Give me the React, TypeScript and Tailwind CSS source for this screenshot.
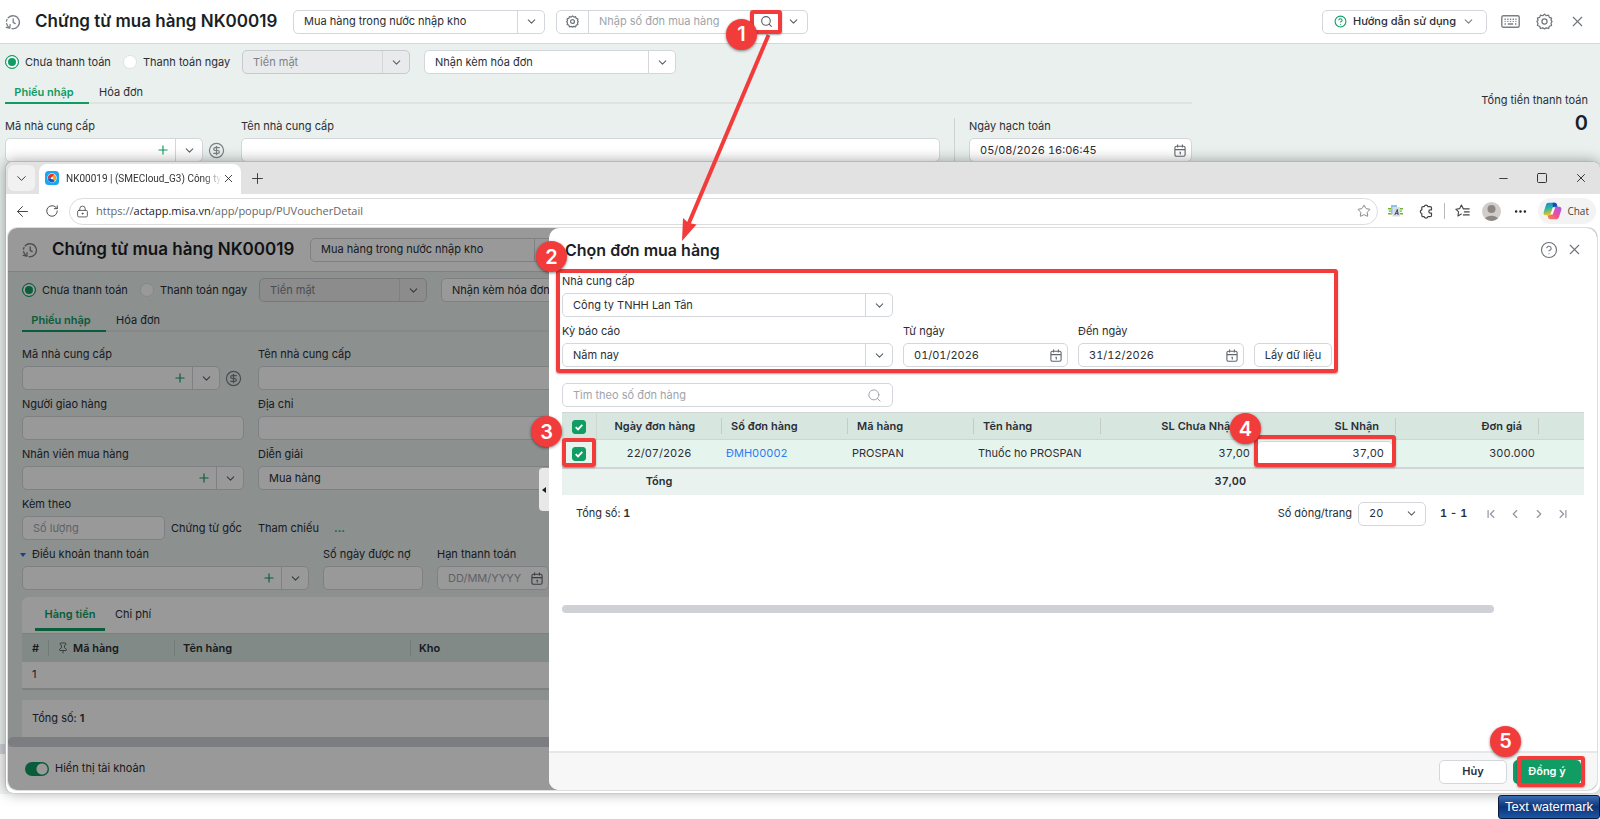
import { useId, useState } from "react"
import type { ReactNode } from "react"
import { clsx } from "clsx"
import {
    ArrowLeft,
    ChevronDown,
    ChevronFirst,
    ChevronLast,
    ChevronLeft,
    ChevronRight,
    CircleDollarSign,
    CircleQuestionMark,
    Ellipsis,
    LockKeyhole,
    Minus,
    Pin,
    Plus,
    RotateCw,
    Search,
    Square,
    Star,
    X,
} from "lucide-react"

const box = "h-6 rounded-[5px] border border-[#d3d6db] bg-white"

/* ---------- icons ---------- */

const HistoryIcon = () => (
    <svg width="16" height="16" viewBox="0 0 16 16" fill="none" stroke="#7b7f86" strokeWidth="1.3" strokeLinecap="round" strokeLinejoin="round">
        <path d="M3.2 3.8A6.500 6.500 0 1 1 7 14.700" />
        <path d="M4.600 13.900A6.500 6.500 0 0 1 1.600 9.600" />
        <path d="M1.200 13.400l3.600.6.300-3.400" />
        <path d="M1.500 7.200a6.500 6.500 0 0 1 .5-1.700" />
        <path d="M8.2 4.8v3.6l2 1.2" />
    </svg>
)

const GearIcon = ({ size = 17 }: { size?: number }) => (
    <svg width={size} height={size} viewBox="0 0 18 18" fill="none" stroke="#6f737b" strokeWidth={size < 15 ? 1.7 : 1.3} strokeLinejoin="round">
        <path d="M9 1.2l1.9 1.7 2.4-.7.8 2.4 2.4.8-.6 2.3L17 9l-1.1 1.9.6 2.3-2.4.8-.8 2.4-2.4-.7L9 16.8l-1.9-1.1-2.4.7-.8-2.4-2.4-.8.6-2.3L1 9l1.1-1.3-.6-2.3 2.4-.8.8-2.4 2.4.7z" />
        <circle cx="9" cy="9" r="2.7" />
    </svg>
)

const KeyboardIcon = () => (
    <svg width="19" height="13" viewBox="0 0 19 13" fill="none" stroke="#7b7f86" strokeWidth="1.4">
        <rect x="0.8" y="0.8" width="17.4" height="11.4" rx="1.5" />
        <path d="M3.5 4.2h12" strokeDasharray="1.3 1.4" />
        <path d="M3.5 6.4h12" strokeDasharray="1.3 1.4" strokeWidth="1" />
        <path d="M3.5 9h1.4M6.8 9h5.4M14 9h1.4" />
    </svg>
)

const CalendarIcon = () => (
    <svg width="12" height="13" viewBox="0 0 12 13" fill="none" stroke="#62666e" strokeWidth="1.1" className="shrink-0">
        <rect x="0.9" y="2.2" width="10.2" height="10" rx="1.5" />
        <path d="M1 5.6h10M3.6 0.4v3M8.4 0.4v3M5.4 8.2h.9v2.4" />
    </svg>
)

const BrandIcon = () => (
    <svg width="14" height="14" viewBox="0 0 14 14" className="shrink-0">
        <rect width="14" height="14" rx="3.5" fill="#18a8f2" />
        <circle cx="7" cy="7" r="4.7" fill="#fff" />
        <path d="M2.700 7.200A4.300 4.300 0 0 1 9.500 3.500L7.200 6A1.200 1.200 0 0 0 6 7.200z" fill="#e5342c" />
        <path d="M9.500 3.500a4.300 4.300 0 0 1 .3 6.800L7.900 8a1.200 1.200 0 0 0-.7-2z" fill="#f9a01b" />
        <path d="M9.800 10.300A4.300 4.300 0 0 1 2.700 7.200H6A1.200 1.200 0 0 0 7.900 8z" fill="#1b56c9" />
    </svg>
)

const TranslateIcon = () => (
    <svg width="15" height="14" viewBox="0 0 15 14">
        <path d="M0 4h4v1.600H0zM.8 6.400h3v1.400h-3zM0 9h4v1.600H0zM11 4h4v1.600h-4zM11 6.400h3v1.400h-3zM11 9h4v1.600h-4z" fill="#6fb52c" />
        <rect x="3" y="1" width="6" height="9" fill="#8ec3ee" />
        <rect x="4.500" y="3" width="7.500" height="9.500" fill="#d5dde8" />
        <path d="M6.800 11L9.300 5.400l.9 5.600M7.700 9.300h2.400" stroke="#333a4a" strokeWidth="0.9" fill="none" />
    </svg>
)

const ExtensionIcon = () => (
    <svg width="15" height="15" viewBox="0 0 15 15" fill="none" stroke="#444" strokeWidth="1.2" strokeLinejoin="round">
        <path d="M5.200 2.600a1.900 1.900 0 0 1 3.700 0h2.400c.7 0 1.200.5 1.200 1.200v2h-1a1.700 1.700 0 0 0 0 3.400h1v2.300c0 .7-.5 1.200-1.200 1.200H8.900a1.900 1.900 0 0 1-3.700 0H4c-.7 0-1.200-.5-1.200-1.200V9.500a1.900 1.900 0 0 1 0-3.700v-2c0-.7.5-1.200 1.200-1.200z" />
    </svg>
)

const FavoritesIcon = () => (
    <svg width="15" height="14" viewBox="0 0 15 14" fill="none" stroke="#444" strokeWidth="1.1" strokeLinejoin="round" strokeLinecap="round">
        <path d="M8.2 4.6L6.4 1 4.7 4.6.8 5.2l2.8 2.7-.7 4.1 3.4-1.9" />
        <path d="M8.4 4.9h5.8M9.4 7.9h4.8M8.4 10.9h5.8" />
    </svg>
)

const CopilotIcon = () => (
    <svg width="19" height="18" viewBox="0 0 19 18">
        <defs>
            <linearGradient id="cpA" x1="0" y1="0" x2="0.3" y2="1">
                <stop offset="0" stopColor="#1b7fe0" />
                <stop offset="0.5" stopColor="#2ab7a0" />
                <stop offset="1" stopColor="#f3c61c" />
            </linearGradient>
            <linearGradient id="cpB" x1="1" y1="0" x2="0" y2="1">
                <stop offset="0" stopColor="#9a5cf0" />
                <stop offset="0.5" stopColor="#ee4f9b" />
                <stop offset="1" stopColor="#fb8a3c" />
            </linearGradient>
        </defs>
        <path d="M5.6 0.8h6.2c1.4 0 1.8 1 2.2 2.3l.5 1.7h-2.2c-1.4 0-2.1.8-2.5 2.1L8.300 11.400c-.4 1.200-1 1.800-2.300 1.800H2.900C.9 13.200.2 11.800.7 10L2.900 3.200C3.400 1.600 4.200.8 5.600.8z" fill="url(#cpA)" />
        <path d="M9.600 0.800h2.200c1.400 0 1.800 1 2.200 2.300l.5 1.700h-2.200c-1.200 0-1.900.6-2.300 1.600z" fill="#1449c4" />
        <path d="M13.400 17.200H7.200c-1.400 0-1.800-1-2.200-2.300l-.5-1.700h1.700c1.400 0 2.100-.8 2.500-2.100l1.500-4.500c.4-1.200 1-1.800 2.300-1.800h3.600c2 0 2.700 1.400 2.200 3.200l-2.200 6.800c-.5 1.600-1.300 2.400-2.700 2.400z" fill="url(#cpB)" />
        <path d="M7.400 12.600L9.900 5.300h2.300l-2.500 7.300z" fill="#fff" />
    </svg>
)

/* ---------- shared controls ---------- */

interface DropdownProps {
    id?: string;
    label?: string;
    value: string;
    disabled?: boolean;
    className?: string;
}

const Dropdown = ({ id, label, value, disabled, className }: DropdownProps) => (
    <div className={clsx("relative flex h-6 rounded-[5px] border", disabled ? "border-[#c6c9cd] bg-[#e9eaeb]" : "border-[#d3d6db] bg-white", className)}>
        <select
            id={id}
            aria-label={label}
            disabled={disabled}
            className={clsx("w-full appearance-none bg-transparent pl-2.5 pr-7 outline-none", disabled && "text-[#7d8187]")}
        >
            <option>{value}</option>
        </select>
        <span className="pointer-events-none absolute inset-y-0 right-0 flex w-[27px] items-center justify-center border-l border-[#d3d6db]">
            <ChevronDown size={13} className="text-[#5c6068]" />
        </span>
    </div>
)

const Combo = ({ id, className }: { id: string; className?: string }) => (
    <div className={clsx("flex min-w-0", box, className)}>
        <input id={id} className="min-w-0 flex-1 bg-transparent pl-2.5 outline-none" />
        <button aria-label="Thêm mới" className="flex w-6 items-center justify-center text-[#109c63]"><Plus size={14} /></button>
        <button aria-label="Mở danh sách" className="flex w-[27px] items-center justify-center border-l border-[#d3d6db] text-[#5c6068]"><ChevronDown size={13} /></button>
    </div>
)

interface DateInputProps {
    id: string;
    value?: string;
    placeholder?: string;
    className?: string;
}

const DateInput = ({ id, value, placeholder, className }: DateInputProps) => (
    <div className={clsx("flex items-center pl-2.5 pr-[5px]", box, className)}>
        <input id={id} defaultValue={value} placeholder={placeholder} className="min-w-0 flex-1 bg-transparent tabular-nums outline-none placeholder:text-[#a0a4ab]" />
        <CalendarIcon />
    </div>
)

interface FieldProps {
    id: string;
    label: string;
    className?: string;
    children: ReactNode;
}

const Field = ({ id, label, className, children }: FieldProps) => (
    <div className={clsx("flex min-w-0 flex-col gap-1", className)}>
        <label htmlFor={id} className="h-4 leading-4 whitespace-nowrap">{label}</label>
        {children}
    </div>
)

const Step = ({ n, className }: { n: number; className: string }) => (
    <span className={clsx("absolute z-20 flex size-[31px] items-center justify-center rounded-full bg-[#f23c3c] text-[20px] font-semibold text-white shadow-[0_1px_3px_rgba(0,0,0,0.5)]", className)}>
        {n}
    </span>
)

const Mark = ({ className }: { className: string }) => (
    <span className={clsx("pointer-events-none absolute z-10 rounded-[3px] border-4 border-[#f23c3c] shadow-[0_1px_2px_rgba(0,0,0,0.35)]", className)} />
)

/* ---------- voucher form ---------- */

const VoucherForm = ({ popup }: { popup?: boolean }) => {
    const id = useId()
    const [ paid, setPaid ] = useState(false)

    return (
        <div className="flex flex-1 flex-col bg-[#e9f0ee]">
            <header className={clsx("flex h-11 shrink-0 items-center border-b border-[#d3d9d8] bg-white pr-[14px]", popup ? "pl-[14px]" : "pl-[5px]")}>
                <HistoryIcon />
                <h1 className="ml-[14px] w-[238px] shrink-0 text-[17px] font-semibold whitespace-nowrap text-[#1b1f26]">Chứng từ mua hàng NK00019</h1>
                <Dropdown label="Loại chứng từ" value="Mua hàng trong nước nhập kho" className="ml-5 w-[252px] shrink-0" />
                {!popup && (
                    <>
                        <div className={clsx("relative ml-[11px] flex w-[252px] shrink-0", box)}>
                            <button aria-label="Thiết lập" className="flex w-8 shrink-0 items-center justify-center border-r border-[#d3d6db]"><GearIcon size={13} /></button>
                            <input aria-label="Số đơn mua hàng" placeholder="Nhập số đơn mua hàng" className="min-w-0 flex-1 pl-2.5 outline-none placeholder:text-[#a0a4ab]" />
                            <button aria-label="Tìm kiếm" className="relative flex w-7 items-center justify-center text-[#5c6068]">
                                <Search size={13} />
                                <Mark className="-inset-x-0.5 -inset-y-px" />
                                <Step n={1} className="top-2 -left-[26px]" />
                            </button>
                            <button aria-label="Mở danh sách" className="flex w-[27px] items-center justify-center text-[#5c6068]"><ChevronDown size={13} /></button>
                        </div>
                        <button className={clsx("ml-auto flex items-center gap-1.5 px-[11px] font-medium whitespace-nowrap", box)}>
                            <CircleQuestionMark size={13} className="text-[#109c63]" />
                            Hướng dẫn sử dụng
                            <ChevronDown size={13} className="text-[#7b7f86]" />
                        </button>
                        <button aria-label="Phím tắt" className="ml-[14px]"><KeyboardIcon /></button>
                        <button aria-label="Tùy chỉnh" className="ml-4"><GearIcon /></button>
                        <button aria-label="Đóng" className="ml-4 text-[#6f737b]"><X size={17} strokeWidth={1.6} /></button>
                    </>
                )}
            </header>

            <div className={clsx("flex", popup ? "pl-[14px]" : "pr-3 pl-[5px]")}>
                <div className="flex min-w-0 flex-1 flex-col">
                    <div className="mt-1.5 flex h-6 items-center whitespace-nowrap">
                        <label className="flex w-[118px] items-center gap-1.5">
                            <input type="radio" name={id + "pay"} checked={!paid} onChange={() => setPaid(false)} className="size-[14px] appearance-none rounded-full border border-white bg-white checked:border-[#109c63] checked:bg-[#109c63] checked:shadow-[inset_0_0_0_2px_#fff]" />
                            Chưa thanh toán
                        </label>
                        <label className="flex w-[119px] items-center gap-1.5">
                            <input type="radio" name={id + "pay"} checked={paid} onChange={() => setPaid(true)} className="size-[14px] appearance-none rounded-full border border-[#dfe3e3] bg-white checked:border-[#109c63] checked:bg-[#109c63] checked:shadow-[inset_0_0_0_2px_#fff]" />
                            Thanh toán ngay
                        </label>
                        <Dropdown label="Phương thức thanh toán" value="Tiền mặt" disabled className="w-[168px] shrink-0" />
                        <Dropdown label="Hóa đơn" value="Nhận kèm hóa đơn" className="ml-[14px] w-[252px] shrink-0" />
                    </div>

                    <div className="flex h-[30px] border-b-2 border-[#dfe4e3]">
                        <button className="-mb-0.5 w-[84px] border-b-2 border-[#109c63] pt-2 pr-1.5 font-semibold text-[#109c63]">Phiếu nhập</button>
                        <button className="px-2.5 pt-2">Hóa đơn</button>
                    </div>

                    <div className="mt-[14px] flex flex-col gap-1.5">
                        <div className="flex gap-[14px]">
                            <Field id={id + "code"} label="Mã nhà cung cấp" className="w-[222px] shrink-0">
                                <div className="flex items-center gap-[5px]">
                                    <Combo id={id + "code"} className="w-[198px]" />
                                    <CircleDollarSign size={17} strokeWidth={1.7} className="text-[#7b7f86]" />
                                </div>
                            </Field>
                            <Field id={id + "name"} label="Tên nhà cung cấp" className="flex-1">
                                <input id={id + "name"} className={clsx("pl-2.5 outline-none", box)} />
                            </Field>
                            {!popup && (
                                <Field id={id + "date"} label="Ngày hạch toán" className="w-[238px] shrink-0 border-l border-[#cdd4d2] pl-[14px]">
                                    <DateInput id={id + "date"} value="05/08/2026 16:06:45" />
                                </Field>
                            )}
                        </div>

                        {popup && (
                            <>
                                <div className="flex gap-[14px]">
                                    <Field id={id + "ship"} label="Người giao hàng" className="w-[222px] shrink-0">
                                        <input id={id + "ship"} className={clsx("pl-2.5 outline-none", box)} />
                                    </Field>
                                    <Field id={id + "addr"} label="Địa chỉ" className="flex-1">
                                        <input id={id + "addr"} className={clsx("pl-2.5 outline-none", box)} />
                                    </Field>
                                </div>
                                <div className="flex gap-[14px]">
                                    <Field id={id + "emp"} label="Nhân viên mua hàng" className="w-[222px] shrink-0">
                                        <Combo id={id + "emp"} />
                                    </Field>
                                    <Field id={id + "desc"} label="Diễn giải" className="flex-1">
                                        <input id={id + "desc"} defaultValue="Mua hàng" className={clsx("pl-2.5 outline-none", box)} />
                                    </Field>
                                </div>
                                <div className="flex items-end">
                                    <Field id={id + "qty"} label="Kèm theo" className="w-[143px] shrink-0">
                                        <input id={id + "qty"} placeholder="Số lượng" className={clsx("pl-2.5 outline-none placeholder:text-[#a0a4ab]", box)} />
                                    </Field>
                                    <span className="ml-1.5 w-[87px] leading-6">Chứng từ gốc</span>
                                    <span className="w-[76px] leading-6">Tham chiếu</span>
                                    <button className="h-6 font-bold text-[#00a862]">...</button>
                                </div>
                                <div className="flex gap-[14px]">
                                    <div className="relative w-[287px] shrink-0">
                                        <span className="absolute top-[7px] -left-[2px] size-0 border-x-[3px] border-t-4 border-x-transparent border-t-[#1a73e8]" />
                                        <div className="flex flex-col gap-1">
                                            <label htmlFor={id + "term"} className="h-4 pl-2.5 leading-4">Điều khoản thanh toán</label>
                                            <Combo id={id + "term"} />
                                        </div>
                                    </div>
                                    <Field id={id + "days"} label="Số ngày được nợ" className="w-[100px] shrink-0">
                                        <input id={id + "days"} className={clsx("pl-2.5 outline-none", box)} />
                                    </Field>
                                    <Field id={id + "due"} label="Hạn thanh toán" className="w-[112px] shrink-0">
                                        <DateInput id={id + "due"} placeholder="DD/MM/YYYY" />
                                    </Field>
                                </div>
                            </>
                        )}
                    </div>
                </div>

                {!popup && (
                    <div className="flex w-[396px] shrink-0 flex-col items-end pt-12">
                        <span className="leading-4">Tổng tiền thanh toán</span>
                        <span className="text-[20px] leading-[30px] font-semibold text-[#1b1f26]">0</span>
                    </div>
                )}
            </div>

            {popup && (
                <>
                    <div className="mt-[7px] ml-[14px] rounded-tl-md bg-white">
                        <div className="flex h-[34px] px-[13px]">
                            <button className="w-[70px] border-b-[3px] border-[#109c63] pt-1 font-semibold text-[#109c63]">Hàng tiền</button>
                            <button className="px-2.5">Chi phí</button>
                        </div>
                        <table className="mt-0.5 w-full table-fixed border-b-2 border-[#d3d6db]">
                            <colgroup>
                                <col className="w-[26px]" />
                                <col className="w-[126px]" />
                                <col className="w-[236px]" />
                                <col />
                            </colgroup>
                            <thead>
                                <tr className="h-7 border-t border-[#d3d6db] bg-[#d8e6e0] text-left">
                                    <th className="pl-2.5 font-semibold">#</th>
                                    <th className="font-semibold">
                                        <span className="flex h-4 items-center gap-1 border-l border-[#c3ccc9] pl-2"><Pin size={12} className="text-[#62666e]" />Mã hàng</span>
                                    </th>
                                    <th className="font-semibold"><span className="block h-4 border-l border-[#c3ccc9] pl-2 leading-4">Tên hàng</span></th>
                                    <th className="font-semibold"><span className="block h-4 border-l border-[#c3ccc9] pl-2 leading-4">Kho</span></th>
                                </tr>
                            </thead>
                            <tbody>
                                <tr className="h-[27px]">
                                    <td className="pl-2.5">1</td>
                                    <td />
                                    <td />
                                    <td />
                                </tr>
                            </tbody>
                        </table>
                    </div>
                    <div className="mt-[10px] ml-[14px] flex-1 bg-white pt-2.5 pl-2.5 leading-4">Tổng số: <b className="font-semibold">1</b></div>
                    <div className="h-2.5 shrink-0 rounded-full bg-[#cfd0d8]" />
                    <div className="flex h-[43px] shrink-0 items-center bg-white pl-[17px]">
                        <label className="flex items-center gap-1.5">
                            <input type="checkbox" role="switch" defaultChecked className="h-[14px] w-6 appearance-none rounded-full bg-[#aaa] bg-[radial-gradient(circle_at_17px_7px,#fff_5px,transparent_6px)] checked:bg-[#109c63]" />
                            Hiển thị tài khoản
                        </label>
                    </div>
                </>
            )}
        </div>
    )
}

/* ---------- order picker ---------- */

const headLine = "block h-4 border-r border-[#c3ccc9] leading-4"
const tick = "block size-[14px] appearance-none rounded-[3px] border border-[#a0a4ab] bg-white checked:border-[#109c63] checked:bg-[#109c63]"

const Tick = ({ label }: { label: string }) => (
    <span className="relative inline-block align-middle">
        <input type="checkbox" aria-label={label} defaultChecked className={tick} />
        <svg width="14" height="14" viewBox="0 0 14 14" className="pointer-events-none absolute inset-0" fill="none" stroke="#fff" strokeWidth="1.8">
            <path d="M3.700 7.100l2.300 2.300 4.300-4.600" />
        </svg>
    </span>
)

const OrderPicker = () => (
    <section className="absolute inset-y-0 right-0 left-[541px] flex flex-col rounded-[10px] bg-white">
        <button aria-label="Thu gọn" className="absolute top-[240px] -left-2.5 flex h-[43px] w-2.5 items-center justify-center rounded-l bg-[#e8e8e8]">
            <span className="size-0 border-y-[3px] border-r-4 border-y-transparent border-r-[#1b1f26]" />
        </button>
        <Step n={2} className="top-[13px] -left-[13px]" />

        <div className="flex h-[45px] shrink-0 items-center pr-[14px] pb-0.5 pl-4">
            <h2 className="text-[16px] font-semibold text-[#1b1f26]">Chọn đơn mua hàng</h2>
            <button aria-label="Trợ giúp" className="ml-auto text-[#6f737b]"><CircleQuestionMark size={18} strokeWidth={1.5} /></button>
            <button aria-label="Đóng" className="ml-2 text-[#6f737b]"><X size={17} strokeWidth={1.6} /></button>
        </div>

        <div className="relative ml-[13px] flex w-[770px] flex-col gap-1.5">
            <Mark className="-inset-x-1.5 -top-1 -bottom-1.5" />
            <Field id="supplier" label="Nhà cung cấp" className="w-[331px]">
                <Dropdown id="supplier" value="Công ty TNHH Lan Tân" />
            </Field>
            <div className="flex items-end gap-2.5">
                <Field id="period" label="Kỳ báo cáo" className="w-[331px]">
                    <Dropdown id="period" value="Năm nay" />
                </Field>
                <Field id="from" label="Từ ngày" className="w-[165px]">
                    <DateInput id="from" value="01/01/2026" />
                </Field>
                <Field id="to" label="Đến ngày" className="w-[166px]">
                    <DateInput id="to" value="31/12/2026" />
                </Field>
                <button className={clsx("flex-1 whitespace-nowrap", box)}>Lấy dữ liệu</button>
            </div>
        </div>

        <div className={clsx("mt-4 ml-[13px] flex w-[331px] shrink-0 items-center pr-2.5 pl-2.5", box)}>
            <input aria-label="Tìm theo số đơn hàng" placeholder="Tìm theo số đơn hàng" className="min-w-0 flex-1 outline-none placeholder:text-[#a0a4ab]" />
            <Search size={15} strokeWidth={1.6} className="text-[#a0a4ab]" />
        </div>

        <div className="relative mx-[13px] mt-[5px]">
            <Step n={3} className="top-1 -left-[31px]" />
            <table className="w-full table-fixed tabular-nums">
                <colgroup>
                    <col className="w-[34px]" />
                    <col className="w-[126px]" />
                    <col className="w-[126px]" />
                    <col className="w-[126px]" />
                    <col />
                    <col className="w-[153px]" />
                    <col className="w-[142px]" />
                    <col className="w-[143px]" />
                    <col className="w-[45px]" />
                </colgroup>
                <thead>
                    <tr className="h-[27px] border-y border-[#cfd6d4] bg-[#d8e6e0] font-semibold">
                        <th className="border-r border-[#cfd6d4]"><Tick label="Chọn tất cả" /></th>
                        <th className="font-semibold"><span className={clsx(headLine, "pr-2")}>Ngày đơn hàng</span></th>
                        <th className="text-left font-semibold"><span className={clsx(headLine, "pl-[9px]")}>Số đơn hàng</span></th>
                        <th className="text-left font-semibold"><span className={clsx(headLine, "pl-[9px]")}>Mã hàng</span></th>
                        <th className="text-left font-semibold"><span className={clsx(headLine, "pl-[9px]")}>Tên hàng</span></th>
                        <th className="text-right font-semibold"><span className={clsx(headLine, "pr-4")}>SL Chưa Nhận</span></th>
                        <th className="relative text-right font-semibold">
                            <Step n={4} className="top-0 -left-6" />
                            <span className={clsx(headLine, "pr-4")}>SL Nhận</span>
                        </th>
                        <th className="text-right font-semibold"><span className={clsx(headLine, "pr-4")}>Đơn giá</span></th>
                        <th />
                    </tr>
                </thead>
                <tbody>
                    <tr className="h-7 bg-[#e6f4ee]">
                        <td className="relative text-center">
                            <Tick label="Chọn ĐMH00002" />
                            <Mark className="inset-x-0 -top-0.5 bottom-0" />
                        </td>
                        <td className="text-center">22/07/2026</td>
                        <td className="pl-1"><a href="#dmh00002" className="text-[#2f7bf0]">ĐMH00002</a></td>
                        <td className="pl-1">PROSPAN</td>
                        <td className="pl-1">Thuốc ho PROSPAN</td>
                        <td className="pr-1 text-right">37,00</td>
                        <td className="relative px-[3px]">
                            <input aria-label="SL Nhận" defaultValue="37,00" className={clsx("w-full pr-2 text-right outline-none", box)} />
                            <Mark className="inset-x-0 -top-[5px] bottom-0" />
                        </td>
                        <td className="pr-1 text-right">300.000</td>
                        <td />
                    </tr>
                </tbody>
                <tfoot>
                    <tr className="h-[27px] border-t-2 border-[#cfd6d4] bg-[#e9f2ef] font-semibold">
                        <td />
                        <td className="text-center">Tổng</td>
                        <td colSpan={3} />
                        <td className="pr-2 text-right">37,00</td>
                        <td colSpan={3} />
                    </tr>
                </tfoot>
            </table>
        </div>

        <div className="mt-[7px] flex h-6 shrink-0 items-center pr-[27px] pl-[27px] tabular-nums">
            <span>Tổng số: <b className="font-semibold">1</b></span>
            <label htmlFor="rows" className="mr-1.5 ml-auto">Số dòng/trang</label>
            <div className="relative flex w-[68px] items-center">
                <select id="rows" className={clsx("w-full appearance-none pl-2.5 outline-none", box)}>
                    <option>20</option>
                </select>
                <ChevronDown size={13} className="pointer-events-none absolute right-2 text-[#5c6068]" />
            </div>
            <span className="mr-[18px] ml-[14px] w-[26px] font-semibold whitespace-nowrap">1 - 1</span>
            <span className="flex gap-2.5 text-[#9094a0]">
                <button aria-label="Trang đầu"><ChevronFirst size={14} /></button>
                <button aria-label="Trang trước"><ChevronLeft size={14} /></button>
                <button aria-label="Trang sau"><ChevronRight size={14} /></button>
                <button aria-label="Trang cuối"><ChevronLast size={14} /></button>
            </span>
        </div>
        <div className="mt-[79px] mr-[103px] ml-[13px] h-2 rounded-full bg-[#ced1d6]" />

        <footer className="mt-auto flex h-[39px] items-center justify-end gap-1.5 rounded-b-[10px] border-t-2 border-[#e7e7e8] bg-[#f7f7f7] pr-4">
            <button className={clsx("w-[68px] font-semibold", box)}>Hủy</button>
            <button className="relative h-6 w-[68px] rounded-[5px] bg-[#109c63] font-semibold text-white">
                Đồng ý
                <Mark className="-top-1 -right-1 -bottom-[3px] left-1" />
                <Step n={5} className="-top-[34px] -left-[23px]" />
            </button>
        </footer>
    </section>
)

/* ---------- browser window ---------- */

const BrowserWindow = () => (
    <div className="absolute top-[161px] right-0 bottom-[26px] left-[5px] flex flex-col rounded-[8px] border-t border-l border-[#b5b8b8] bg-white shadow-[0_0_14px_rgba(0,0,0,0.35)]">
        <div className="flex h-8 shrink-0 items-center rounded-t-[8px] bg-[#e2e2e2] font-['Open_Sans',sans-serif] text-[#333]">
            <button aria-label="Tìm tab" className="ml-[2px] flex h-[26px] w-[27px] items-center justify-center rounded-md bg-[#f1f1f1]"><ChevronDown size={15} strokeWidth={1.5} /></button>
            <div className="ml-1 flex h-[30px] w-[202px] items-center self-end rounded-t-lg bg-white pb-0.5 pl-1.5">
                <BrandIcon />
                <span className="ml-[7px] w-[156px] mask-r-from-88% mask-r-to-100% font-['Roboto',sans-serif] text-[10px] whitespace-nowrap">NK00019 | (SMECloud_G3) Công ty</span>
                <button aria-label="Đóng tab"><X size={13} strokeWidth={1.7} /></button>
            </div>
            <button aria-label="Tab mới" className="ml-2"><Plus size={17} strokeWidth={1.3} /></button>
            <div className="mr-3 ml-auto flex gap-[26px]">
                <button aria-label="Thu nhỏ"><Minus size={13} strokeWidth={1.7} /></button>
                <button aria-label="Phóng to"><Square size={12} strokeWidth={2} /></button>
                <button aria-label="Đóng cửa sổ"><X size={14} strokeWidth={1.7} /></button>
            </div>
        </div>

        <div className="flex h-[34px] shrink-0 items-center font-['Open_Sans',sans-serif] text-[#444]">
            <button aria-label="Quay lại" className="ml-2"><ArrowLeft size={17} strokeWidth={1.4} /></button>
            <button aria-label="Tải lại" className="mr-2.5 ml-[14px]"><RotateCw size={14} strokeWidth={1.6} /></button>
            <div className="flex h-[27px] flex-1 items-center rounded-full border border-[#dcdcdc] pr-1.5 pl-1.5">
                <LockKeyhole size={13} strokeWidth={1.5} />
                <span className="ml-[7px] text-[11px] text-[#666]">https://<span className="text-[#222]">actapp.misa.vn</span>/app/popup/PUVoucherDetail</span>
                <button aria-label="Yêu thích" className="ml-auto text-[#777]"><Star size={14} strokeWidth={1.5} /></button>
            </div>
            <button aria-label="Tiện ích dịch" className="ml-2.5"><TranslateIcon /></button>
            <button aria-label="Tiện ích" className="ml-4"><ExtensionIcon /></button>
            <span className="mx-2.5 h-4 w-px bg-[#b8b8b8]" />
            <button aria-label="Danh sách yêu thích"><FavoritesIcon /></button>
            <button aria-label="Hồ sơ" className="ml-3">
                <svg width="19" height="19" viewBox="0 0 19 19">
                    <circle cx="9.5" cy="9.5" r="9.5" fill="#d0cdca" />
                    <circle cx="9.5" cy="7" r="4" fill="#8c8783" />
                    <path d="M3.200 16.600a6.800 4.600 0 0 1 12.600 0 9.500 9.500 0 0 1-12.600 0z" fill="#8c8783" />
                </svg>
            </button>
            <button aria-label="Khác" className="ml-3 text-[#222]"><Ellipsis size={15} /></button>
            <button className="mr-1 ml-2.5 flex h-[26px] items-center gap-[5px] rounded-full bg-[#f3f3f3] pr-[7px] pl-[5px] text-[10px]">
                <CopilotIcon />
                Chat
            </button>
        </div>

        <div className="relative mr-[3px] mb-[3px] ml-[2px] flex flex-1 flex-col rounded-[9px] shadow-[0_0_0_1px_#dedede]">
            <div className="relative flex flex-1 flex-col overflow-hidden rounded-[9px]">
                <VoucherForm popup />
                <div className="absolute inset-0 bg-black/40" />
            </div>
            <OrderPicker />
        </div>
    </div>
)

export default function App() {
    return (
        <main className="relative flex min-h-screen flex-col overflow-hidden bg-white font-['Inter','Noto_Sans',sans-serif] text-[11px] text-[#2a2e35]">
            <VoucherForm />
            <div className="h-2.5 bg-[#cfd0d8]" />
            <div className="mb-[25px] h-10 bg-[#f3f4f4]" />
            <BrowserWindow />
            <svg width="110" height="215" viewBox="0 0 110 215" className="pointer-events-none absolute top-[30px] left-[670px]">
                <path d="M98.500 5L18.500 194" stroke="#f23c3c" strokeWidth="4" />
                <path d="M12 211l1-23 5.500 5 8 1.500z" fill="#f23c3c" />
            </svg>
            <div className="absolute right-0 bottom-0 flex h-6 w-[102px] items-center justify-center rounded-[3px] border border-[#0a1c3c] bg-linear-to-b from-[#3a6cb4] via-[#0d3478] to-[#1c56a6] font-['Liberation_Sans',Arial,sans-serif] text-[13px] text-white">
                Text watermark
            </div>
        </main>
    )
}
